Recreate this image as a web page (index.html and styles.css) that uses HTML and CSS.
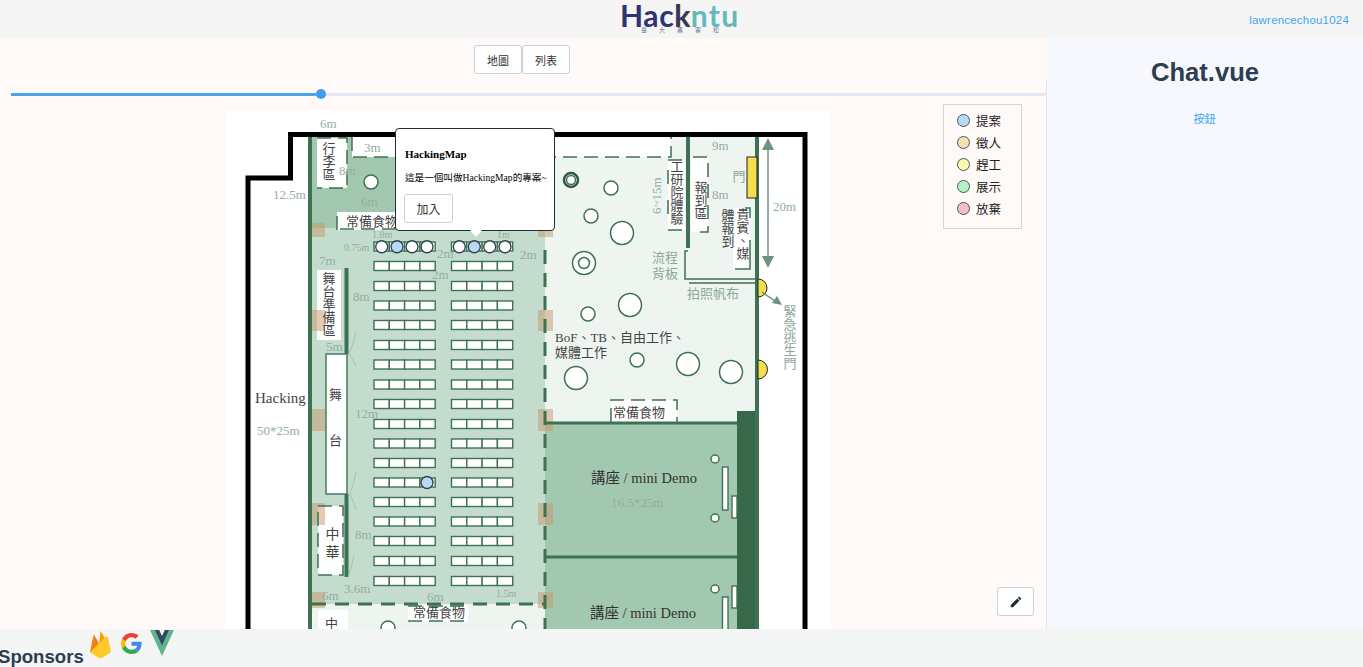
FILE: index.html
```html
<!DOCTYPE html>
<html lang="en">
<head>
    <meta charset="utf-8">
    <title>HackingMap</title>
    <link rel="stylesheet" href="styles.css">
</head>
<body>
    <header class="topbar">
        <div class="logo">
            <div class="logo-word"><span class="logo-hack">Hac<span class="logo-k">k</span></span><span class="logo-ntu">ntu</span></div>
            <div class="logo-sub">臺大黑客松</div>
        </div>
        <a class="user-link">lawrencechou1024</a>
    </header>

    <main class="main">
        <section class="map-panel">
            <div class="tabs">
                <button class="tab">地圖</button>
                <button class="tab">列表</button>
            </div>
            <div class="stage">
                <div class="slider">
                    <div class="slider-fill"></div>
                    <div class="slider-dot"></div>
                    <div class="slider-rest"></div>
                </div>
                <div class="map">
                    <svg class="floor" viewBox="225 110 606 519" width="606" height="519">
                        <defs>
                            <g id="table-row">
                                <rect class="table" x="374" y="0" width="15.3" height="9"/>
                                <rect class="table" x="389.3" y="0" width="15.3" height="9"/>
                                <rect class="table" x="404.6" y="0" width="15.3" height="9"/>
                                <rect class="table" x="419.9" y="0" width="15.3" height="9"/>
                                <rect class="table" x="451.5" y="0" width="15.3" height="9"/>
                                <rect class="table" x="466.8" y="0" width="15.3" height="9"/>
                                <rect class="table" x="482.1" y="0" width="15.3" height="9"/>
                                <rect class="table" x="497.4" y="0" width="15.3" height="9"/>
                            </g>
                        </defs>

                        <!-- rooms -->
                        <rect class="room-mid" x="310" y="137" width="235" height="91"/>
                        <rect class="room-light" x="310" y="228" width="235" height="376"/>
                        <rect class="room-pale" x="310" y="604" width="235" height="25"/>
                        <rect class="room-pale" x="545" y="137" width="212" height="286"/>
                        <rect class="room-mid" x="545" y="423" width="192" height="206"/>
                        <rect class="paper" x="352" y="137" width="319" height="20"/>
                        <rect class="wall-fill" x="737" y="411" width="20" height="218"/>

                        <!-- white boxes for labels -->
                        <rect class="paper" x="317" y="138" width="30" height="50"/>
                        <rect class="paper" x="337" y="212" width="62" height="18"/>
                        <rect class="paper" x="317" y="270" width="24" height="70"/>
                        <rect class="paper" x="318" y="506" width="25" height="69"/>
                        <rect class="paper" x="318" y="610" width="30" height="19"/>
                        <rect class="paper" x="408" y="605" width="60" height="17"/>
                        <rect class="paper" x="668" y="160" width="17" height="70"/>
                        <rect class="paper" x="691" y="157" width="17" height="75"/>
                        <rect class="paper" x="733" y="208" width="17" height="62"/>
                        <rect class="paper" x="611" y="400" width="66" height="22"/>

                        <!-- door shading -->
                        <rect class="door" x="311" y="223" width="14" height="14"/>
                        <rect class="door" x="310" y="310" width="15" height="21"/>
                        <rect class="door" x="310" y="409" width="15" height="22"/>
                        <rect class="door" x="310" y="503" width="15" height="22"/>
                        <rect class="door" x="310" y="592" width="15" height="16"/>
                        <rect class="door" x="538" y="223" width="15" height="14"/>
                        <rect class="door" x="538" y="310" width="15" height="21"/>
                        <rect class="door" x="538" y="409" width="15" height="22"/>
                        <rect class="door" x="538" y="503" width="15" height="22"/>
                        <rect class="door" x="538" y="592" width="15" height="16"/>

                        <!-- walls -->
                        <path class="outer-wall" d="M248 640V178H290.5V134.5H805V640"/>
                        <path class="wall" d="M310 137V629M757 137V629M688 137V248M346.5 268V354M346.5 494V577"/>
                        <path class="wall-thin" d="M545 423H737M545 557H737"/>
                        <path class="wall-line" d="M688 251H685V279H757M689 283H757"/>
                        <path class="dash-wall" d="M545 250V629"/>
                        <path class="dash-wall" d="M312 604H545"/>
                        <path class="dash" d="M352 137V157H671V137"/>
                        <path class="dash" d="M317 138H347V188H317"/>
                        <path class="dash" d="M318 506H343V575H318V506"/>
                        <path class="dash" d="M337 230V212M340 229H400"/>
                        <path class="dash" d="M668 160H684M668 170V190M668 200V220M668 230H684"/>
                        <path class="dash" d="M693 157H708V232H693"/>
                        <path class="dash" d="M611 422V400H677V422"/>
                        <path class="dash" d="M408 606H467M408 621H467"/>
                        <path class="wall-line" d="M745 208H750V218M750 240V269H735"/>
                        <path class="curve" d="M356 332C354 340 352 348 349 353C351 358 355 362 356 366M356 472C354 485 351 488 350 494C352 500 355 505 356 510M354 555C352 565 350 572 348 577"/>

                        <!-- door and exits -->
                        <rect class="door-yellow" x="747" y="157" width="10" height="41"/>
                        <path class="door-yellow" d="M758 279A9 9 0 0 1 758 297Z"/>
                        <path class="door-yellow" d="M758 360A9 9 0 0 1 758 379Z"/>

                        <path class="arrow-line" d="M768 145V262M762 292L778 303"/>
                        <path class="arrow-head" d="M768 138L774 150H762Z"/>
                        <path class="arrow-head" d="M768 268L774 256H762Z"/>
                        <path class="arrow-head" d="M782 305L772 303L777 296Z"/>

                        <!-- round tables -->
                        <circle class="ring" cx="371" cy="182" r="7"/>
                        <circle class="ring dark" cx="571" cy="180" r="7"/>
                        <circle class="ring" cx="571" cy="180" r="4.5"/>
                        <circle class="ring" cx="611" cy="188" r="7"/>
                        <circle class="ring" cx="591" cy="216" r="7"/>
                        <circle class="ring" cx="622" cy="233" r="11.5"/>
                        <circle class="ring" cx="584" cy="263" r="11.5"/>
                        <circle class="ring" cx="584" cy="263" r="5.5"/>
                        <circle class="ring" cx="588" cy="314" r="7"/>
                        <circle class="ring" cx="630" cy="305" r="11.5"/>
                        <circle class="ring" cx="637" cy="360" r="7"/>
                        <circle class="ring" cx="688" cy="364" r="11.5"/>
                        <circle class="ring" cx="731" cy="372" r="11.5"/>
                        <circle class="ring" cx="576" cy="378" r="11.5"/>
                        <circle class="ring" cx="388" cy="628" r="7"/>
                        <circle class="ring" cx="519" cy="628" r="7"/>
                        <circle class="ring" cx="715" cy="459" r="4"/>
                        <circle class="ring" cx="715" cy="518" r="4"/>
                        <circle class="ring" cx="715" cy="589" r="4"/>
                        <rect class="table" x="722.5" y="467" width="5.5" height="43"/>
                        <rect class="table" x="732" y="496" width="5" height="22"/>
                        <rect class="table" x="722.5" y="597" width="5.5" height="40"/>
                        <rect class="table" x="732" y="586" width="5" height="22"/>

                        <!-- stage -->
                        <rect class="table" x="326" y="354" width="21" height="140"/>

                        <!-- table rows -->
                        <use href="#table-row" y="242"/>
                        <use href="#table-row" y="261.5"/>
                        <use href="#table-row" y="281.5"/>
                        <use href="#table-row" y="301"/>
                        <use href="#table-row" y="320.5"/>
                        <use href="#table-row" y="340.5"/>
                        <use href="#table-row" y="360"/>
                        <use href="#table-row" y="380"/>
                        <use href="#table-row" y="399.5"/>
                        <use href="#table-row" y="419.5"/>
                        <use href="#table-row" y="439"/>
                        <use href="#table-row" y="458.5"/>
                        <use href="#table-row" y="478"/>
                        <use href="#table-row" y="497.5"/>
                        <use href="#table-row" y="517"/>
                        <use href="#table-row" y="536.5"/>
                        <use href="#table-row" y="556.5"/>
                        <use href="#table-row" y="576.5"/>

                        <!-- project pins -->
                        <circle class="pin" cx="381.7" cy="246.7" r="6"/>
                        <circle class="pin blue" cx="397" cy="246.7" r="6"/>
                        <circle class="pin" cx="412" cy="246.7" r="6"/>
                        <circle class="pin" cx="427" cy="246.7" r="6"/>
                        <circle class="pin" cx="459.3" cy="246.7" r="6"/>
                        <circle class="pin blue" cx="474.3" cy="246.7" r="6"/>
                        <circle class="pin" cx="489.7" cy="246.7" r="6"/>
                        <circle class="pin" cx="505" cy="246.7" r="6"/>
                        <circle class="pin blue" cx="427" cy="482.5" r="6"/>

                        <!-- labels -->
                        <text class="dim" x="320" y="128">6m</text>
                        <text class="dim" x="364" y="152">3m</text>
                        <text class="dim" x="339" y="175">8m</text>
                        <text class="dim" x="361" y="206">6m</text>
                        <text class="dim" x="273" y="199">12.5m</text>
                        <text class="dim sm" x="372" y="238">1.8m</text>
                        <text class="dim sm" x="344" y="251">0.75m</text>
                        <text class="dim sm" x="497" y="238">1m</text>
                        <text class="dim" x="437" y="258">2m</text>
                        <text class="dim" x="432" y="279">2m</text>
                        <text class="dim" x="520" y="259">2m</text>
                        <text class="dim" x="319" y="265">7m</text>
                        <text class="dim" x="353" y="301">8m</text>
                        <text class="dim" x="326" y="351">5m</text>
                        <text class="dim" x="355" y="418">12m</text>
                        <text class="dim" x="355" y="539">8m</text>
                        <text class="dim" x="344" y="593">3.6m</text>
                        <text class="dim" x="322" y="600">6m</text>
                        <text class="dim" x="427" y="601">6m</text>
                        <text class="dim sm" x="496" y="597">1.5m</text>
                        <text class="dim" x="257" y="435">50*25m</text>
                        <text class="dim" x="712" y="150">9m</text>
                        <text class="dim" x="712" y="199">8m</text>
                        <text class="dim" x="773" y="211">20m</text>
                        <text class="dim" x="611" y="507">16.5*25m</text>
                        <text class="dim" transform="translate(661 214) rotate(-90)">6~15m</text>

                        <text class="name" x="346" y="226">常備食物</text>
                        <text class="name" x="413" y="617">常備食物</text>
                        <text class="name" x="613" y="417">常備食物</text>
                        <text class="name big" x="255" y="403">Hacking</text>
                        <text class="name" x="325" y="628">中</text>
                        <text class="name" x="329" y="399">舞</text>
                        <text class="name" x="329" y="445">台</text>
                        <text class="name" x="555" y="342">BoF、TB、自由工作、</text>
                        <text class="name" x="555" y="357">媒體工作</text>
                        <text class="name strong" x="591" y="483">講座 / mini Demo</text>
                        <text class="name strong" x="590" y="618">講座 / mini Demo</text>

                        <text class="name vert" x="328" y="142">行李區</text>
                        <text class="name vert" x="328" y="272">舞台準備區</text>
                        <text class="name vert wide" x="331" y="527">中華</text>
                        <text class="name vert" x="676" y="160">工研院體驗</text>
                        <text class="name vert" x="700" y="181">報到區</text>
                        <text class="name vert" x="742" y="208">貴賓、媒</text>
                        <text class="name vert" x="727" y="209">體報到</text>
                        <text class="faint vert" x="738" y="170">門</text>
                        <text class="faint vert" x="789" y="305">緊急逃生門</text>
                        <text class="faint" x="652" y="262">流程</text>
                        <text class="faint" x="652" y="278">背板</text>
                        <text class="faint" x="687" y="298">拍照帆布</text>
                    </svg>
                    <div class="popover">
                        <h4 class="popover-title">HackingMap</h4>
                        <p class="popover-text">這是一個叫做HackingMap的專案~</p>
                        <button class="btn">加入</button>
                    </div>
                </div>
                <ul class="legend">
                    <li class="legend-item"><span class="dot dot-idea"></span>提案</li>
                    <li class="legend-item"><span class="dot dot-hire"></span>徵人</li>
                    <li class="legend-item"><span class="dot dot-rush"></span>趕工</li>
                    <li class="legend-item"><span class="dot dot-show"></span>展示</li>
                    <li class="legend-item"><span class="dot dot-drop"></span>放棄</li>
                </ul>
                <button class="btn edit-btn">
                    <svg viewBox="0 0 24 24" width="14" height="14"><path d="M3 17.25V21h3.75L17.81 9.94l-3.75-3.75L3 17.25zM20.71 7.04c.39-.39.39-1.02 0-1.41l-2.34-2.34c-.39-.39-1.02-.39-1.41 0l-1.83 1.83 3.75 3.75 1.83-1.83z"/></svg>
                </button>
            </div>
        </section>

        <aside class="chat">
            <h1 class="chat-title">Chat.vue</h1>
            <a class="chat-link">按鈕</a>
        </aside>
    </main>

    <footer class="sponsors">
        <h2 class="sponsors-title">Sponsors</h2>
        <svg class="sponsor firebase" viewBox="0 0 24 30" width="23" height="29">
            <path fill="#ffa000" d="M12 1c2 3 5 7 6 11L10 20Z"/>
            <path fill="#f57f17" d="M1 23L4.5 6c.2-.8 1-.9 1.4-.2L10 13 9 22Z"/>
            <path fill="#ffca28" d="M1 23L18.5 6.5c.5-.4 1.1-.2 1.2.5L23 23l-9.5 6c-1 .5-2 .5-3 0Z"/>
        </svg>
        <svg class="sponsor google" viewBox="0 0 48 48" width="21" height="21">
            <path fill="#ea4335" d="M24 9.5c3.54 0 6.71 1.22 9.21 3.6l6.85-6.85C35.9 2.38 30.47 0 24 0 14.62 0 6.51 5.38 2.56 13.22l7.98 6.19C12.43 13.72 17.74 9.5 24 9.5z"/>
            <path fill="#4285f4" d="M46.98 24.55c0-1.57-.15-3.09-.38-4.55H24v9.02h12.94c-.58 2.96-2.26 5.48-4.78 7.18l7.73 6c4.51-4.18 7.09-10.36 7.09-17.65z"/>
            <path fill="#fbbc05" d="M10.53 28.59c-.48-1.45-.76-2.99-.76-4.59s.27-3.14.76-4.59l-7.98-6.19C.92 16.46 0 20.12 0 24c0 3.88.92 7.54 2.56 10.78l7.97-6.19z"/>
            <path fill="#34a853" d="M24 48c6.48 0 11.93-2.13 15.89-5.81l-7.73-6c-2.15 1.45-4.92 2.3-8.16 2.3-6.26 0-11.57-4.22-13.47-9.91l-7.98 6.19C6.51 42.62 14.62 48 24 48z"/>
        </svg>
        <svg class="sponsor vue" viewBox="0 0 256 221" width="24" height="26" preserveAspectRatio="none">
            <path fill="#5fb58a" d="M204.8 0H256L128 220.8 0 0h50.56L128 132.48 204.8 0z"/>
            <path fill="#35495e" d="M50.56 0L128 133.12 204.8 0h-47.36L128 51.2 97.92 0H50.56z"/>
        </svg>
    </footer>
</body>
</html>
```

FILE: styles.css
```css
* {
    box-sizing: border-box;
}

html, body {
    height: 100%;
}

body {
    display: flex;
    flex-direction: column;
    height: 100vh;
    margin: 0;
    overflow: hidden;
    color: #2c3e50;
    font-family: "Liberation Sans", Arial, "Noto Sans CJK TC", sans-serif;
}

/* top bar */
.topbar {
    display: flex;
    flex: none;
    justify-content: flex-end;
    align-items: center;
    position: relative;
    height: 38px;
    padding: 2px 14px 0 0;
    background-color: #f5f5f5;
}

.logo {
    position: absolute;
    top: 0;
    left: 620px;
    width: 120px;
}

.logo-word {
    height: 26px;
    font-family: Lato, sans-serif;
    font-size: 30px;
    font-weight: 700;
    line-height: 30px;
    white-space: nowrap;
}

.logo-hack {
    color: #2f3472;
    letter-spacing: 0.6px;
}

.logo-k {
    text-shadow: 1px 0 0 #f6dc2b;
}

.logo-ntu {
    color: #62b9bb;
    letter-spacing: 1.2px;
}

.logo-sub {
    color: #6a6d93;
    font-family: "Noto Sans CJK TC", sans-serif;
    font-size: 6px;
    line-height: 8px;
    letter-spacing: 12px;
    text-align: center;
    white-space: nowrap;
    padding-left: 12px;
}

.user-link {
    color: #42a5ee;
    font-size: 11.5px;
    letter-spacing: 0.2px;
}

/* main */
.main {
    display: flex;
    flex: 1;
    min-height: 0;
}

.map-panel {
    display: flex;
    flex-direction: column;
    width: 1047px;
    background-color: #fffaf8;
}

.tabs {
    display: flex;
    flex: none;
    justify-content: center;
    height: 42px;
    padding: 7px 3px 0 0;
}

.tab,
.btn {
    background-color: white;
    border: 1px solid #c8d0dc;
    border-radius: 3px;
    color: #333;
    font-family: "Noto Sans CJK TC", sans-serif;
    font-size: 11px;
    cursor: pointer;
}

.tab {
    width: 48px;
    height: 29px;
    padding: 0;
}

.stage {
    position: relative;
    flex: 1;
    min-height: 0;
    overflow: hidden;
    border-right: 1px solid #e3e6ee;
    background-color: #fffaf8;
}

.slider {
    display: flex;
    align-items: center;
    height: 28px;
    margin-bottom: 2px;
    padding-left: 11px;
}

.slider-fill {
    width: 305px;
    height: 3px;
    background-color: #4aa3ee;
}

.slider-dot {
    flex: none;
    width: 10px;
    height: 10px;
    border-radius: 50%;
    background-color: #3f9fee;
}

.slider-rest {
    flex: 1;
    height: 3px;
    background-color: #e3e8f3;
}

.map {
    position: relative;
    width: 606px;
    margin-left: 225px;
}

.floor {
    display: block;
    background-color: white;
}

/* floor plan */
.room-mid { fill: #a2c9b0; }
.room-light { fill: #c3dccd; }
.room-pale { fill: #eef5f1; }
.paper { fill: white; }
.wall-fill { fill: #36694a; }
.door { fill: #c8966a; opacity: 0.5; }

.outer-wall {
    fill: none;
    stroke: black;
    stroke-width: 5;
}

.wall,
.wall-thin,
.wall-line,
.dash-wall,
.dash,
.curve,
.arrow-line,
.ring,
.table {
    stroke: #3f7253;
}

.wall,
.wall-thin,
.wall-line,
.dash-wall,
.dash,
.curve,
.arrow-line {
    fill: none;
}

.wall { stroke-width: 4; }
.wall-thin { stroke-width: 3; }
.wall-line { stroke-width: 1.5; }

.dash-wall {
    stroke-width: 3;
    stroke-dasharray: 14 9;
}

.dash {
    stroke-width: 1.5;
    stroke-dasharray: 14 7;
}

.curve {
    stroke: #9db8a8;
    stroke-width: 0.8;
}

.door-yellow {
    fill: #f3e04c;
    stroke: #222;
    stroke-width: 1;
}

.arrow-line {
    stroke: #6f9180;
    stroke-width: 1.5;
}

.arrow-head { fill: #6f9180; }

.ring {
    fill: white;
    stroke-width: 1.5;
}

.ring.dark {
    stroke: #2f5a42;
    stroke-width: 2.5;
}

.table {
    fill: white;
    stroke-width: 1.4;
}

.pin {
    fill: white;
    stroke: #2e4650;
    stroke-width: 1.4;
}

.pin.blue { fill: #b9d7f7; }

.dim,
.name,
.faint {
    font-family: "Liberation Serif", "Noto Sans CJK TC", serif;
}

.dim {
    fill: #94ad9e;
    font-size: 13px;
}

.dim.sm { font-size: 10px; }

.name {
    fill: #444;
    font-size: 13px;
}

.name.big { font-size: 15px; }
.name.strong { fill: #333; font-size: 14.5px; }

.faint {
    fill: #8ea698;
    font-size: 13px;
}

.vert {
    writing-mode: vertical-rl;
    text-orientation: upright;
}

.wide { letter-spacing: 4px; font-size: 14px; }

/* popover over the map */
.popover {
    position: absolute;
    top: 18px;
    left: 170px;
    width: 160px;
    height: 103px;
    padding: 19px 8px 0;
    background-color: white;
    border: 1px solid #1e2d3b;
    border-radius: 4px;
    color: black;
    font-family: "Liberation Serif", "Noto Sans CJK TC", serif;
}

.popover::after {
    content: "";
    position: absolute;
    left: 76px;
    bottom: -5px;
    width: 8px;
    height: 8px;
    background-color: white;
    transform: rotate(45deg);
}

.popover-title {
    margin: 0 0 0 1px;
    font-size: 11px;
    line-height: 13px;
}

.popover-text {
    margin: 10px 0 10px 1px;
    font-size: 9.6px;
    line-height: 13px;
    white-space: nowrap;
}

.btn {
    width: 49px;
    height: 29px;
    padding: 0;
    font-size: 12px;
}

/* legend over the map */
.legend {
    position: absolute;
    top: 24px;
    left: 943px;
    width: 79px;
    height: 125px;
    margin: 0;
    padding: 4px 0 0 13px;
    border: 1px solid #d5d5d5;
    list-style: none;
    color: #222;
    font-family: "Noto Sans CJK TC", sans-serif;
    font-size: 12.5px;
}

.legend-item {
    display: flex;
    align-items: center;
    gap: 6px;
    height: 22px;
}

.dot {
    width: 13px;
    height: 13px;
    border: 1.5px solid #3f5a5e;
    border-radius: 50%;
}

.dot-idea { background-color: #b9d7f7; }
.dot-hire { background-color: #f8dfb0; }
.dot-rush { background-color: #fbf8b0; }
.dot-show { background-color: #b5f3c2; }
.dot-drop { background-color: #f5bccb; }

.edit-btn {
    display: flex;
    justify-content: center;
    align-items: center;
    position: absolute;
    top: 507px;
    left: 997px;
    width: 37px;
    height: 29px;
}

.edit-btn svg { fill: #1f2d3d; }

/* chat */
.chat {
    flex: 1;
    padding-top: 19px;
    background-color: #f7f8fe;
    text-align: center;
}

.chat-title {
    margin: 0 0 22px;
    font-size: 25.6px;
    line-height: 30px;
}

.chat-link {
    margin-left: -1px;
    color: #42a5ee;
    font-family: "Noto Sans CJK TC", sans-serif;
    font-size: 11px;
}

/* footer */
.sponsors {
    display: flex;
    flex: none;
    align-items: flex-end;
    height: 38px;
    background-color: #f4f5f5;
}

.sponsors-title {
    flex: none;
    margin: 0 0 0 -2px;
    font-size: 18.6px;
    line-height: 20px;
}

.sponsor {
    flex: none;
    align-self: flex-start;
}

.firebase { margin: 1px 0 0 5px; }
.google { margin: 4px 0 0 9px; }
.vue { margin: 1px 0 0 8px; }
```
